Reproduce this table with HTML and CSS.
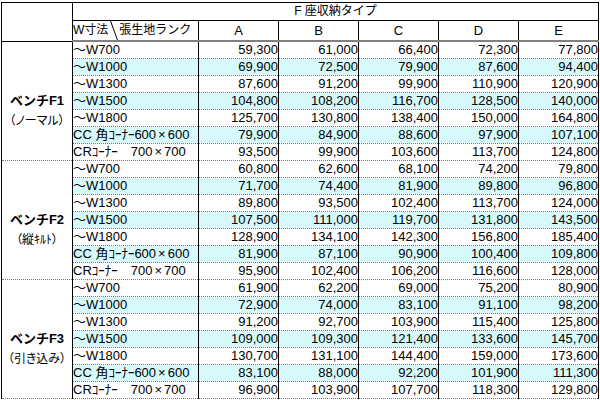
FILE: index.html
```html
<!DOCTYPE html>
<html lang="ja">
<head>
<meta charset="utf-8">
<title>F座収納タイプ 価格表</title>
<link rel="stylesheet" href="styles.css">
</head>
<body>
<table class="price">
  <colgroup>
    <col class="c-grp"><col class="c-name"><col class="c-num"><col class="c-num"><col class="c-num"><col class="c-num"><col class="c-num">
  </colgroup>
  <tr class="h1">
    <td class="corner" rowspan="2"></td>
    <td class="title" colspan="6">F 座収納タイプ</td>
  </tr>
  <tr class="h2">
    <td class="hname">W寸法<svg class="diag" width="8" height="19" viewBox="0 0 8 19"><line x1="0.5" y1="0" x2="7.5" y2="19" stroke="#000" stroke-width="1"/></svg>張生地ランク</td>
    <td class="hcol">A</td><td class="hcol">B</td><td class="hcol">C</td><td class="hcol">D</td><td class="hcol">E</td>
  </tr>

  <tr class="gs">
    <td class="grp" rowspan="7"><span class="g1">ベンチF1</span><br><span class="g2">（ノーマル）</span></td>
    <td class="nm">～W700</td><td class="n">59,300</td><td class="n">61,000</td><td class="n">66,400</td><td class="n">72,300</td><td class="n">77,800</td>
  </tr>
  <tr class="hl"><td class="nm">～W1000</td><td class="n">69,900</td><td class="n">72,500</td><td class="n">79,900</td><td class="n">87,600</td><td class="n">94,400</td></tr>
  <tr><td class="nm">～W1300</td><td class="n">87,600</td><td class="n">91,200</td><td class="n">99,900</td><td class="n">110,900</td><td class="n">120,900</td></tr>
  <tr class="hl"><td class="nm">～W1500</td><td class="n">104,800</td><td class="n">108,200</td><td class="n">116,700</td><td class="n">128,500</td><td class="n">140,000</td></tr>
  <tr><td class="nm">～W1800</td><td class="n">125,700</td><td class="n">130,800</td><td class="n">138,400</td><td class="n">150,000</td><td class="n">164,800</td></tr>
  <tr class="hl"><td class="nm">CC 角ｺｰﾅｰ600<span class="x">×</span>600</td><td class="n">79,900</td><td class="n">84,900</td><td class="n">88,600</td><td class="n">97,900</td><td class="n">107,100</td></tr>
  <tr><td class="nm">CRｺｰﾅｰ　700<span class="x">×</span>700</td><td class="n">93,500</td><td class="n">99,900</td><td class="n">103,600</td><td class="n">113,700</td><td class="n">124,800</td></tr>

  <tr class="gs">
    <td class="grp" rowspan="7"><span class="g1">ベンチF2</span><br><span class="g2">（縦ｷﾙﾄ）</span></td>
    <td class="nm">～W700</td><td class="n">60,800</td><td class="n">62,600</td><td class="n">68,100</td><td class="n">74,200</td><td class="n">79,800</td>
  </tr>
  <tr class="hl"><td class="nm">～W1000</td><td class="n">71,700</td><td class="n">74,400</td><td class="n">81,900</td><td class="n">89,800</td><td class="n">96,800</td></tr>
  <tr><td class="nm">～W1300</td><td class="n">89,800</td><td class="n">93,500</td><td class="n">102,400</td><td class="n">113,700</td><td class="n">124,000</td></tr>
  <tr class="hl"><td class="nm">～W1500</td><td class="n">107,500</td><td class="n">111,000</td><td class="n">119,700</td><td class="n">131,800</td><td class="n">143,500</td></tr>
  <tr><td class="nm">～W1800</td><td class="n">128,900</td><td class="n">134,100</td><td class="n">142,300</td><td class="n">156,800</td><td class="n">185,400</td></tr>
  <tr class="hl"><td class="nm">CC 角ｺｰﾅｰ600<span class="x">×</span>600</td><td class="n">81,900</td><td class="n">87,100</td><td class="n">90,900</td><td class="n">100,400</td><td class="n">109,800</td></tr>
  <tr><td class="nm">CRｺｰﾅｰ　700<span class="x">×</span>700</td><td class="n">95,900</td><td class="n">102,400</td><td class="n">106,200</td><td class="n">116,600</td><td class="n">128,000</td></tr>

  <tr class="gs">
    <td class="grp" rowspan="7"><span class="g1">ベンチF3</span><br><span class="g2">（引き込み）</span></td>
    <td class="nm">～W700</td><td class="n">61,900</td><td class="n">62,200</td><td class="n">69,000</td><td class="n">75,200</td><td class="n">80,900</td>
  </tr>
  <tr class="hl"><td class="nm">～W1000</td><td class="n">72,900</td><td class="n">74,000</td><td class="n">83,100</td><td class="n">91,100</td><td class="n">98,200</td></tr>
  <tr><td class="nm">～W1300</td><td class="n">91,200</td><td class="n">92,700</td><td class="n">103,900</td><td class="n">115,400</td><td class="n">125,800</td></tr>
  <tr class="hl"><td class="nm">～W1500</td><td class="n">109,000</td><td class="n">109,300</td><td class="n">121,400</td><td class="n">133,600</td><td class="n">145,700</td></tr>
  <tr><td class="nm">～W1800</td><td class="n">130,700</td><td class="n">131,100</td><td class="n">144,400</td><td class="n">159,000</td><td class="n">173,600</td></tr>
  <tr class="hl"><td class="nm">CC 角ｺｰﾅｰ600<span class="x">×</span>600</td><td class="n">83,100</td><td class="n">88,000</td><td class="n">92,200</td><td class="n">101,900</td><td class="n">111,300</td></tr>
  <tr class="last"><td class="nm">CRｺｰﾅｰ　700<span class="x">×</span>700</td><td class="n">96,900</td><td class="n">103,900</td><td class="n">107,700</td><td class="n">118,300</td><td class="n">129,800</td></tr>
</table>
</body>
</html>
```
FILE: styles.css
```css
html, body {
  margin: 0;
  padding: 0;
  background: #fff;
}

.price {
  border-collapse: collapse;
  table-layout: fixed;
  width: 597px;
  margin: 2px 0 0 1px;
  font-family: "Liberation Sans", "Noto Sans CJK JP", sans-serif;
  font-size: 13px;
  color: #000;
}

.c-grp { width: 71px; }
.c-name { width: 126px; }
.c-num { width: 80px; }

.price td {
  padding: 0;
  border: 1px solid #000;
  height: 16px;
  line-height: 16px;
  white-space: nowrap;
  overflow: hidden;
}

/* header */
.h1 td { height: 17px; line-height: 17px; }
.h2 td { height: 18px; line-height: 18px; border-bottom: 2px solid #808080; }
.corner { border-bottom: 2px solid #808080; }
.title {
  text-align: center;
  font-size: 12px;
}
.hname {
  font-size: 12px;
  padding-left: 1px;
}
.diag {
  vertical-align: top;
  margin: 0 1px 0 2px;
}
.hcol { text-align: center; }

/* data rows */
.price tr.hl td, .price tr:not(.h1):not(.h2) td {
  border-top: 1px dotted #7a7a7a;
  border-bottom: 1px dotted #7a7a7a;
}
.price tr.gs td { border-top: 1px solid #000; }
.price tr.last td { border-bottom: 1px solid #000; }
.price td.grp {
  border: 1px solid #000;
  text-align: center;
  vertical-align: middle;
  padding-top: 20px;
  line-height: 20px;
  background: #fff;
}
.g1 {
  font-weight: bold;
  font-size: 13px;
}
.g2 {
  font-size: 12px;
  font-feature-settings: "palt";
}

.hl td { background: #d6fafc; }

.nm { padding-left: 1px; }
.x { padding: 0 2px; }
.n {
  text-align: right;
  padding-right: 2px;
}
```
